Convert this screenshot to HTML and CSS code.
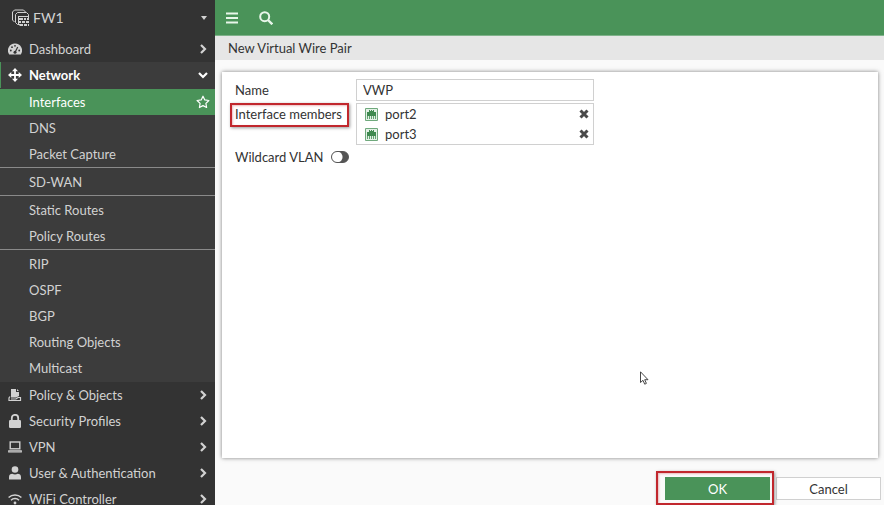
FILE: index.html
```html
<!DOCTYPE html>
<html lang="en">
<head>
    <meta charset="UTF-8">
    <meta name="viewport" content="width=device-width, initial-scale=1.0">
    <title>New Virtual Wire Pair</title>
    <link rel="stylesheet" href="styles.css">
</head>
<body>
    <!-- shared icons -->
    <svg class="sprite" aria-hidden="true">
        <symbol id="chevron" viewBox="0 0 10 10"><path d="M3 1l4 4-4 4" fill="none" stroke="currentColor" stroke-width="2.200"/></symbol>
        <symbol id="port" viewBox="0 0 13 13">
            <path d="M.5.5h12v12H.5z" fill="#e3f1e6" stroke="#6fa97c"/>
            <path d="M2 8V4h2V2h1v1h1V2h1v1h1V2h1v2h2v4z" fill="#3f8a50"/>
            <path d="M2.500 8v3M4.500 8v3M6.500 8v3M8.500 8v3M10.500 8v3" stroke="#62a371"/>
        </symbol>
        <symbol id="cross" viewBox="0 0 10 10"><path d="M1.500 1.500l7 7M8.500 1.500l-7 7" stroke="currentColor" stroke-width="3"/></symbol>
    </svg>
    <div class="app">
        <aside class="sidebar">
            <div class="device">
                <svg class="device-icon" viewBox="0 0 18 18" fill="none" stroke="currentColor">
                    <path d="M2.500 13L.5 11V3l2-2h9l2 2"/>
                    <path d="M5.500 15.500l-2-2V5.500l2-2h9l2 2V7M5.500 15.500H7"/>
                    <path d="M6 7h11v10H8l-2-2z" fill="currentColor" stroke="none"/>
                    <path d="M7 8.500h9M7 11.500h10M7 14.500h10M11.500 9v2M14.500 9v2M9.500 12v2M13.500 12v2M11.500 15v2M15.500 15v2" stroke="#333"/>
                </svg>
                <select class="device-select" aria-label="Device">
                    <option>FW1</option>
                </select>
                <svg class="caret" viewBox="0 0 8 4"><path d="M1 0h6L4 4z" fill="currentColor"/></svg>
            </div>
            <nav>
                <a class="item" href="#">
                    <svg class="icon" viewBox="0 0 14 14"><path d="M7 1.500a7 7 0 0 0-5.800 11h11.600A7 7 0 0 0 7 1.500z" fill="currentColor"/><g fill="#333"><circle cx="2.800" cy="8.500" r=".9"/><circle cx="4" cy="5.200" r=".9"/><circle cx="7" cy="3.800" r=".9"/><circle cx="11.200" cy="8.500" r=".9"/></g><path d="M7 10.500l2.700-5.500" stroke="#333" stroke-width="1.200"/><circle cx="7" cy="10.300" r="1.500" fill="#333"/></svg>
                    <span>Dashboard</span>
                    <svg class="chevron"><use href="#chevron"/></svg>
                </a>
                <div class="open">
                    <a class="item active" href="#">
                        <svg class="icon" viewBox="0 0 14 14"><path d="M7 2v10M2 7h10" stroke="currentColor" stroke-width="1.800"/><path d="M7 0l3 3.300H4zM7 14l3-3.300H4zM0 7l3.300-3v6zM14 7l-3.300-3v6z" fill="currentColor"/></svg>
                        <span>Network</span>
                        <svg class="chevron down"><use href="#chevron"/></svg>
                    </a>
                    <div class="submenu">
                        <div class="group">
                            <a class="item selected" href="#">
                                <span>Interfaces</span>
                                <svg class="star" viewBox="0 0 14 14"><path d="M7 1.200l1.800 3.700 4.100.6-3 2.900.7 4.100L7 10.600l-3.600 1.900.7-4.100-3-2.900 4.100-.6z" fill="none" stroke="currentColor" stroke-width="1.200" stroke-linejoin="round"/></svg>
                            </a>
                            <a class="item" href="#"><span>DNS</span></a>
                            <a class="item" href="#"><span>Packet Capture</span></a>
                        </div>
                        <div class="group">
                            <a class="item" href="#"><span>SD-WAN</span></a>
                        </div>
                        <div class="group">
                            <a class="item" href="#"><span>Static Routes</span></a>
                            <a class="item" href="#"><span>Policy Routes</span></a>
                        </div>
                        <div class="group">
                            <a class="item" href="#"><span>RIP</span></a>
                            <a class="item" href="#"><span>OSPF</span></a>
                            <a class="item" href="#"><span>BGP</span></a>
                            <a class="item" href="#"><span>Routing Objects</span></a>
                            <a class="item" href="#"><span>Multicast</span></a>
                        </div>
                    </div>
                </div>
                <a class="item" href="#">
                    <svg class="icon" viewBox="0 0 14 14"><path d="M3 1h5v3h3v4L8 9.500H3z" fill="currentColor"/><path d="M9 1l2 2H9z" fill="currentColor"/><path d="M2 8.500L1 10v2.500h11.500V9.500H10L8 11H3" fill="none" stroke="currentColor" stroke-width="1.200"/></svg>
                    <span>Policy &amp; Objects</span>
                    <svg class="chevron"><use href="#chevron"/></svg>
                </a>
                <a class="item" href="#">
                    <svg class="icon" viewBox="0 0 14 14"><rect x="1" y="6" width="12" height="8" rx="1.200" fill="currentColor"/><path d="M3.800 7V4a3.200 3.200 0 0 1 6.400 0v3" fill="none" stroke="currentColor" stroke-width="1.800"/></svg>
                    <span>Security Profiles</span>
                    <svg class="chevron"><use href="#chevron"/></svg>
                </a>
                <a class="item" href="#">
                    <svg class="icon" viewBox="0 0 14 14" fill="none" stroke="currentColor" stroke-width="1.400"><rect x="2.200" y="2" width="9.600" height="6.800"/><path d="M.7 10.700h12.600v1.300H.7z" stroke-width="1.100"/></svg>
                    <span>VPN</span>
                    <svg class="chevron"><use href="#chevron"/></svg>
                </a>
                <a class="item" href="#">
                    <svg class="icon" viewBox="0 0 14 14" fill="currentColor"><circle cx="7" cy="3.500" r="3.300"/><path d="M1 13.500V11c0-2 1.500-3.200 3.300-3.200 1.700 1 3.700 1 5.400 0C11.500 7.800 13 9 13 11v2.500z"/></svg>
                    <span>User &amp; Authentication</span>
                    <svg class="chevron"><use href="#chevron"/></svg>
                </a>
                <a class="item" href="#">
                    <svg class="icon" viewBox="0 0 14 14" fill="none" stroke="currentColor" stroke-width="1.500"><path d="M.6 5.500a9.200 9.200 0 0 1 12.800 0M3 8.200a5.700 5.700 0 0 1 8 0"/><circle cx="7" cy="11" r="1.400" fill="currentColor" stroke="none"/></svg>
                    <span>WiFi Controller</span>
                    <svg class="chevron"><use href="#chevron"/></svg>
                </a>
            </nav>
        </aside>

        <main class="main">
            <header class="topbar">
                <button class="icon-button" type="button" aria-label="Menu">
                    <svg viewBox="0 0 14 14"><path d="M1 2.500h12M1 7h12M1 11.500h12" stroke="currentColor" stroke-width="2"/></svg>
                </button>
                <button class="icon-button" type="button" aria-label="Search">
                    <svg viewBox="0 0 14 14" fill="none" stroke="currentColor" stroke-width="2"><circle cx="5.700" cy="5.700" r="4.500"/><path d="M9 9l4.300 4.300" stroke-width="2.400"/></svg>
                </button>
            </header>
            <h1 class="title">New Virtual Wire Pair</h1>
            <form class="form">
                <div class="card">
                    <div class="row">
                        <label for="name">Name</label>
                        <input class="text" type="text" id="name" value="VWP">
                    </div>
                    <div class="row">
                        <div><span class="marked" id="members-label">Interface members</span></div>
                        <ul class="members" aria-labelledby="members-label">
                            <li>
                                <svg class="port"><use href="#port"/></svg>
                                <span>port2</span>
                                <button class="remove" type="button" aria-label="Remove port2"><svg><use href="#cross"/></svg></button>
                            </li>
                            <li>
                                <svg class="port"><use href="#port"/></svg>
                                <span>port3</span>
                                <button class="remove" type="button" aria-label="Remove port3"><svg><use href="#cross"/></svg></button>
                            </li>
                        </ul>
                    </div>
                    <div class="toggle-row">
                        <label for="wildcard">Wildcard VLAN</label>
                        <input class="toggle" type="checkbox" id="wildcard">
                    </div>
                    <svg class="pointer" viewBox="0 0 9 14"><path d="M.5.800v10.700l2.500-2.200 1.700 3.900 1.700-.8-1.700-3.700h3.300z" fill="#fff" stroke="#333" stroke-width=".9"/></svg>
                </div>
                <div class="actions">
                    <div class="ok-frame"><button class="button primary" type="submit">OK</button></div>
                    <button class="button" type="button">Cancel</button>
                </div>
            </form>
        </main>
    </div>
</body>
</html>
```
FILE: styles.css
```css
* {
    box-sizing: border-box;
}
body {
    margin: 0;
    font-family: Lato, "Liberation Sans", sans-serif;
    font-size: 13px;
    line-height: 20px;
    color: #333;
    background: #fafafa;
}
button, input, select {
    font: inherit;
    color: inherit;
    margin: 0;
}
.sprite {
    display: none;
}
.app {
    display: flex;
    height: 100vh;
    overflow: hidden;
}

/* sidebar */
.sidebar {
    flex: 0 0 215px;
    overflow: hidden;
    background: #333;
    color: #d2d2d2;
}
.device {
    display: flex;
    align-items: center;
    height: 36px;
    padding: 0 7px 0 12px;
}
.device-icon {
    width: 18px;
    height: 18px;
}
.device-select {
    flex: 1;
    padding: 0 0 0 3px;
    appearance: none;
    border: 0;
    background: transparent;
    font-size: 14px;
}
.caret {
    width: 8px;
    height: 4px;
}
.item {
    display: flex;
    align-items: center;
    height: 26px;
    padding: 0 7px 0 8px;
    color: inherit;
    text-decoration: none;
}
.item span {
    flex: 1;
}
.icon {
    width: 14px;
    height: 14px;
    margin-right: 7px;
}
.chevron {
    width: 10px;
    height: 10px;
}
.down {
    transform: rotate(90deg);
}
.open {
    padding-bottom: 1px;
    background: #3c3c3c;
}
.active {
    padding-left: 7px;
    border-left: 1px solid #4a9359;
    color: #fff;
    font-weight: 700;
}
.submenu .item {
    padding-left: 29px;
}
.group {
    padding-top: 1px;
}
.group + .group {
    border-top: 1px solid #8a8a8a;
}
.submenu .selected {
    padding-right: 5px;
    background: #4a9359;
    color: #fff;
}
.star {
    width: 14px;
    height: 14px;
}

/* content */
.main {
    flex: 1;
    display: flex;
    flex-direction: column;
    min-width: 0;
}
.topbar {
    display: flex;
    gap: 20px;
    height: 36px;
    padding: 0 10px;
    background: #4a9359;
    border-bottom: 1px solid #7fb28a;
    color: #e8f6ea;
}
.icon-button {
    display: flex;
    align-items: center;
    padding: 0;
    border: 0;
    background: transparent;
}
.icon-button svg {
    width: 14px;
    height: 14px;
}
.title {
    height: 24px;
    margin: 0;
    padding: 0 13px;
    background: #e6e6e6;
    font-size: 13px;
    font-weight: 400;
    line-height: 24px;
}
.form {
    flex: 1;
    display: flex;
    flex-direction: column;
    padding: 12px 3px 5px 7px;
}
.card {
    position: relative;
    flex: 1;
    margin-right: 3px;
    padding: 7px 13px;
    background: #fff;
    box-shadow: 0 0 4px rgba(0, 0, 0, 0.5);
}
.row {
    display: grid;
    grid-template-columns: 121px 238px;
    margin-bottom: 2px;
    line-height: 22px;
}
.text {
    width: 100%;
    height: 22px;
    padding: 0 6px;
    border: 1px solid #d0d0d0;
    background: #fff;
}
.marked, .ok-frame {
    position: relative;
}
.marked::after, .ok-frame::after {
    content: "";
    position: absolute;
    border: 2px solid #c1272d;
    box-shadow: 1px 1px 3px rgba(0, 0, 0, 0.4), inset 1px 1px 2px rgba(193, 39, 45, 0.3);
    pointer-events: none;
}
.marked::after {
    inset: -3px -7px -5px -5px;
}
.members {
    margin: 0;
    padding: 0 4px 0 8px;
    border: 1px solid #d0d0d0;
    list-style: none;
    line-height: 20px;
}
.members li {
    display: flex;
    align-items: center;
    height: 20px;
}
.members span {
    flex: 1;
}
.port {
    width: 13px;
    height: 13px;
    margin-right: 7px;
}
.remove {
    display: flex;
    padding: 0;
    border: 0;
    background: transparent;
    color: #4a4a4a;
}
.remove svg {
    width: 10px;
    height: 10px;
}
.toggle-row {
    display: flex;
    align-items: center;
    gap: 8px;
}
.toggle {
    width: 18px;
    height: 12px;
    appearance: none;
    border: 1px solid #555;
    border-radius: 6px;
    background: radial-gradient(circle at 5px 5px, #fff 5px, #555 6px);
}
.pointer {
    position: absolute;
    right: 229px;
    bottom: 73px;
    width: 9px;
    height: 14px;
}
.actions {
    display: flex;
    justify-content: flex-end;
    gap: 6px;
    padding-top: 19px;
}
.button {
    display: block;
    width: 105px;
    height: 23px;
    padding: 1px 0 0;
    border: 1px solid #d0d0d0;
    background: #fff;
    line-height: 20px;
}
.primary {
    border-color: #4a9359;
    background: #4a9359;
    color: #fff;
}
.ok-frame::after {
    inset: -6px -4px -5px -9px;
}
```
